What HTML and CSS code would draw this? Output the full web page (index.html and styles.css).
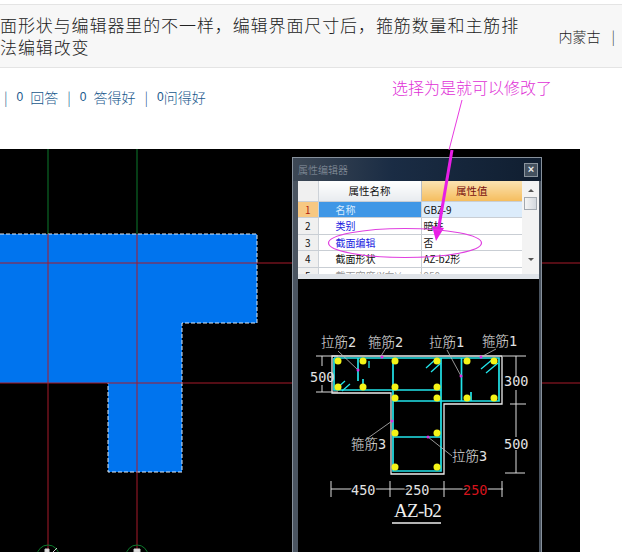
FILE: index.html
```html
<!DOCTYPE html>
<html lang="zh">
<head>
<meta charset="utf-8">
<title>属性编辑器</title>
<link rel="stylesheet" href="styles.css">
</head>
<body>
<div class="page">
  <header class="band">
    <h1 class="question">面形状与编辑器里的不一样，编辑界面尺寸后，箍筋数量和主筋排<br>法编辑改变</h1>
    <div class="region"><span>内蒙古</span><span class="bar">|</span></div>
  </header>
  <div class="stats">
    <span class="sep">|</span><span class="num">0</span><span>回答</span>
    <span class="sep">|</span><span class="num">0</span><span>答得好</span>
    <span class="sep">|</span><span class="num tight">0</span><span>问得好</span>
  </div>
  <div class="canvas">
    <svg class="cad" width="580" height="403" viewBox="0 149 580 403">
      <path class="grid-green" d="M48 149V234M137 149V234"/>
      <path class="blue" d="M0 234H257V323H182V472H108V383H0Z"/>
      <path class="dash" d="M0 234H257V323H182V472H108V383"/>
      <path class="grid-red" d="M0 263H580M0 383H580M48 234V552M137 234V552"/>
      <circle class="axis" cx="48" cy="556" r="11"/>
      <circle class="axis" cx="137" cy="556" r="11"/>
      <path class="axis-mark" d="M45 552H49V549H45ZM134 552H140V549H134ZM53 552L57 548"/>
    </svg>
    <section class="window">
      <div class="titlebar"><span class="wintitle">属性编辑器</span><span class="close">×</span></div>
      <div class="sheet">
        <div class="grid">
          <table class="props">
            <tr class="head"><th class="idx"></th><th class="name-h">属性名称</th><th class="val-h">属性值</th></tr>
            <tr class="sel"><td class="idx on">1</td><td class="key on-key">名称</td><td class="val on-val">GBZ-9</td></tr>
            <tr><td class="idx">2</td><td class="key link">类别</td><td class="val">暗柱</td></tr>
            <tr><td class="idx">3</td><td class="key link">截面编辑</td><td class="val">否</td></tr>
            <tr><td class="idx">4</td><td class="key">截面形状</td><td class="val">AZ-b2形</td></tr>
            <tr class="cut"><td class="idx">5</td><td class="key gray">截面宽度(X向)(mm)</td><td class="val gray">950</td></tr>
          </table>
          <div class="scroll"><span class="up"></span><span class="thumb"></span><span class="down"></span></div>
        </div>
        <div class="drawing">
          <svg class="section" width="241" height="273" viewBox="298 279 241 273">
            <path class="outline" d="M332 356H502V404H444V474H391V393H332Z"/>
            <path class="dimline" d="M316 356H338M316 392H338M322 356V366M322 385V392M503 356H526M510 404H526M516 356V376M516 390V437M516 450V473M505 473H525M331 489H503M331 481V497M390 481V497M444 481V497M502 481V497"/>
            <path class="rebar" d="M334 358H499V401H393V471H441V358M334 358V390H441M393 358V471M393 437H441M358 358V381M363 390V379M461.500 358V401M471 401V392"/>
            <path class="rebar thin" d="M336 389L345 381M342 391L350 384M426 368L436 359M431 372L441 363M481 369L493 359M486 373L498 363M369 361V368"/>
            <g class="dots">
              <circle cx="338" cy="361" r="3.500"/><circle cx="363" cy="361" r="3.500"/><circle cx="395" cy="361" r="3.500"/><circle cx="437" cy="361" r="3.500"/><circle cx="467" cy="361" r="3.500"/><circle cx="494" cy="361" r="3.500"/>
              <circle cx="338" cy="387" r="3.500"/><circle cx="363" cy="387" r="3.500"/><circle cx="395" cy="387" r="3.500"/><circle cx="437" cy="387" r="3.500"/>
              <circle cx="395" cy="398" r="3.500"/><circle cx="437" cy="398" r="3.500"/><circle cx="467" cy="398" r="3.500"/><circle cx="494" cy="398" r="3.500"/>
              <circle cx="395" cy="433" r="3.500"/><circle cx="437" cy="433" r="3.500"/><circle cx="395" cy="467" r="3.500"/><circle cx="437" cy="467" r="3.500"/>
            </g>
            <path class="leader" d="M338 351L358 370M386 348L381 356M447 350L461 376M496 349L481 357M368 438L392 421M428 437L452 456"/>
            <g class="marks"><circle cx="358" cy="370" r="1.500"/><circle cx="382" cy="357" r="1.500"/><circle cx="461" cy="376" r="1.500"/><circle cx="481" cy="357" r="1.500"/><circle cx="392" cy="421" r="1.500"/><circle cx="428" cy="437" r="1.500"/></g>
            <g class="label">
              <text x="321" y="347">拉筋2</text><text x="368" y="347">箍筋2</text><text x="429" y="347">拉筋1</text><text x="482" y="346">箍筋1</text>
              <text x="310" y="382">500</text><text x="504" y="386">300</text><text x="504" y="449">500</text>
              <text x="351" y="449">箍筋3</text><text x="452" y="461">拉筋3</text>
              <text x="351" y="495" class="halo">450</text><text x="405" y="495" class="halo">250</text><text x="463" y="495" class="halo red">250</text>
              <text x="394" y="517" class="title">AZ-b2</text>
            </g>
            <path class="under" d="M392 523H441"/>
          </svg>
        </div>
      </div>
    </section>
  </div>
  <svg class="note" width="622" height="552" viewBox="0 0 622 552">
    <text class="note-text" x="392" y="94">选择为是就可以修改了</text>
    <path class="note-thin" d="M462 100L449 150"/>
    <path class="note-arrow" d="M452 150L438 232"/>
    <path class="note-head" d="M432 226L444 228L436 241Z"/>
    <ellipse class="note-ring" cx="405" cy="243" rx="76.500" ry="14.500"/>
  </svg>
</div>
</body>
</html>
```
FILE: styles.css
```css
* { box-sizing: border-box; }
html, body { margin: 0; padding: 0; background: #fff; }
body { font-family: "Noto Sans CJK SC", "Liberation Sans", sans-serif; overflow: hidden; }
.page { position: relative; width: 622px; height: 552px; overflow: hidden; }

.band {
  margin-top: 4px; height: 64px;
  display: flex; justify-content: space-between;
  background: #f7f7f7;
  border-top: 1px solid #e4e4e4; border-bottom: 1px solid #e4e4e4;
}
.question { margin: 9px 0 0; font-size: 17px; line-height: 22px; font-weight: 300; letter-spacing: .9px; color: #222; white-space: nowrap; }
.region { display: flex; gap: 11px; margin: 21px 7px 0 0; font-size: 14px; line-height: 20px; font-weight: 300; color: #222; }
.bar { color: #333; }

.stats {
  height: 81px; padding: 19px 0 0 4px;
  display: flex; font-size: 14px; line-height: 20px; font-weight: 300; color: #17578c;
}
.sep { margin: 0 9px 0 9px; color: #17578c; }
.sep:first-child { margin-left: 0; }
.num { margin-right: 7px; font-size: 12px; font-family: "Liberation Sans", sans-serif; }
.num.tight { margin-right: 0; }

.canvas { position: relative; width: 580px; height: 403px; background: #000; }
.cad { display: block; }
.blue { fill: #0074ee; }
.dash { fill: none; stroke: #dfe8f2; stroke-width: 1; stroke-dasharray: 4 2; }
.grid-green { fill: none; stroke: #0c7a2c; stroke-width: 1; }
.grid-red { fill: none; stroke: #a81a2a; stroke-width: 1; }
.axis { fill: none; stroke: #0c7a2c; }
.axis-mark { fill: #ddd; stroke: #ccc; }

.window {
  position: absolute; left: 292px; top: 8px; width: 250px; height: 395px;
  background: #4a5460; border: 1px solid #87919c; border-bottom: 0;
  padding: 0 2px 0 5px; display: flex; flex-direction: column;
}
.titlebar {
  height: 23px; flex: none; display: flex; align-items: center; justify-content: space-between;
  background: linear-gradient(90deg, #3d4855, #1a2c44 40%, #101e30);
  margin: 0 -2px 0 -5px; padding: 0 3px 0 5px;
}
.wintitle { font-size: 10px; font-weight: 300; color: #8f98a2; }
.close {
  width: 14px; height: 14px; background: #44515f; border: 1px solid #8a949e;
  color: #e8e8e8; font: bold 11px/11px "Liberation Sans", sans-serif; text-align: center;
}
.sheet { flex: 1; min-height: 0; display: flex; flex-direction: column; background: #000; }
.grid { display: flex; height: 98px; flex: none; overflow: hidden; background: #fff; border-bottom: 5px solid #dfe3e8; }
.props { width: 224px; border-collapse: collapse; table-layout: fixed; font-size: 10px; color: #111; font-weight: 400; align-self: flex-start; }
.props th, .props td { padding: 0; height: 16.500px; border-bottom: 1px solid #c9ced4; overflow: hidden; white-space: nowrap; font-weight: 400; }
.props .head th { height: 20px; font-size: 10.500px; }
.props .idx { width: 20px; text-align: center; background: #f0f0f0; border-right: 1px solid #cdd2d8; }
.name-h { width: 103px; text-align: center; background: linear-gradient(#fff, #e8ebef); border-right: 1px solid #b9bec4; }
.val-h { text-align: center; color: #7a1010; background: linear-gradient(#fbe3b2, #f5bd5e); }
.key { padding-left: 17px !important; border-right: 1px solid #c9ced4; }
.val { padding-left: 2px !important; }
.link { color: #1a1ae0; }
.on { background: #f7c882 !important; color: #b02010; }
.on-key { background: #3f97e6; color: #d8ecff; }
.on-val { background: #dcecfb; }
.gray { color: #999; }
.scroll { flex: 1; display: flex; flex-direction: column; align-items: center; background: #f3f3f3; padding-top: 8px; }
.up { border: 3px solid transparent; border-bottom: 3px solid #555; border-top: 0; }
.thumb { width: 13px; height: 13px; margin-top: 5px; background: linear-gradient(90deg, #f5f5f5, #d3d8de); border: 1px solid #a3a9b0; }
.down { margin-top: 48px; border: 3px solid transparent; border-top: 3px solid #555; border-bottom: 0; }
.drawing { flex: 1; min-height: 0; background: #000; }
.section { display: block; }
.outline { fill: none; stroke: #ededed; stroke-width: 1.300; }
.dimline { fill: none; stroke: #dcdcdc; stroke-width: 1; }
.rebar { fill: none; stroke: #22e4ea; stroke-width: 1.700; }
.rebar.thin { stroke-width: 1.300; }
.dots circle { fill: #f4f417; }
.leader { fill: none; stroke: #bdbdbd; stroke-width: .8; }
.marks circle { fill: #e02ce0; }
.label text { font-family: "DejaVu Sans Mono", "Noto Sans CJK SC", monospace; font-size: 13.500px; font-weight: 300; fill: #e2e2e2; }
.label .halo { paint-order: stroke; stroke: #000; stroke-width: 3px; }
.label .red { fill: #d5141c; }
.label .title { font-family: "Liberation Serif", serif; font-size: 19px; letter-spacing: -.7px; fill: #efefef; }
.under { stroke: #efefef; stroke-width: 1.500; }

.note { position: absolute; left: 0; top: 0; pointer-events: none; }
.note-text { font-family: "Noto Sans CJK SC", sans-serif; font-size: 16px; font-weight: 300; fill: #e02fd6; }
.note-thin { fill: none; stroke: #e83ae0; stroke-width: 1; }
.note-arrow { fill: none; stroke: #e81ee6; stroke-width: 3; }
.note-head { fill: #e81ee6; }
.note-ring { fill: none; stroke: #e040e0; stroke-width: 1.200; }
```
